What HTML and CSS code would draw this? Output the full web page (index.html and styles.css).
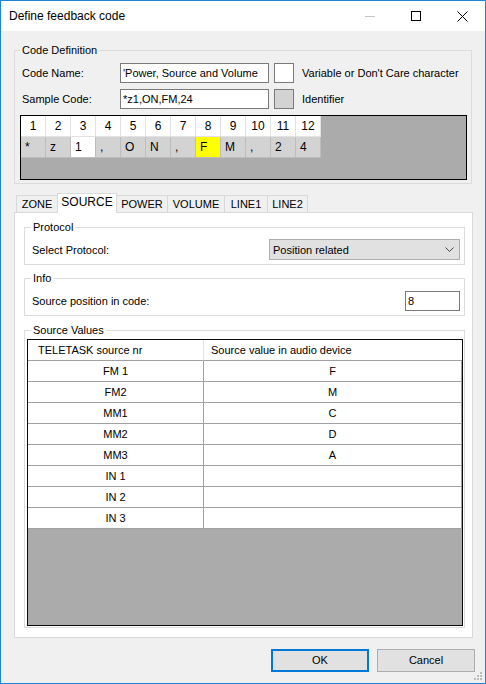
FILE: index.html
```html
<!DOCTYPE html>
<html>
<head>
<meta charset="utf-8">
<link rel="stylesheet" href="styles.css">
</head>
<body>
<div class="window">
  <div class="titlebar">
    <span class="title">Define feedback code</span>
    <div class="caption">
      <span class="cbtn"><svg width="10" height="10" viewBox="0 0 10 10"><line x1="0" y1="5.5" x2="10" y2="5.5" stroke="#c4c4c4" stroke-width="1"/></svg></span>
      <span class="cbtn"><svg width="10" height="10" viewBox="0 0 10 10"><rect x="0.5" y="0.5" width="9" height="9" fill="none" stroke="#000" stroke-width="1"/></svg></span>
      <span class="cbtn"><svg width="11" height="11" viewBox="0 0 11 11"><path d="M0.5 0.5 L10.5 10.5 M10.5 0.5 L0.5 10.5" stroke="#000" stroke-width="1" fill="none"/></svg></span>
    </div>
  </div>
  <div class="client">
    <fieldset class="group codedef">
      <legend class="legend-def">Code Definition</legend>
      <div class="row">
        <span class="lbl">Code Name:</span>
        <div class="textbox tb-wide">'Power, Source and Volume</div>
        <div class="swatch sw-white"></div>
        <span class="swatch-lbl">Variable or Don't Care character</span>
      </div>
      <div class="row row2">
        <span class="lbl">Sample Code:</span>
        <div class="textbox tb-wide">*z1,ON,FM,24</div>
        <div class="swatch sw-grey"></div>
        <span class="swatch-lbl">Identifier</span>
      </div>
      <div class="codegrid">
        <div class="grow ghead">
          <span class="gc">1</span><span class="gc">2</span><span class="gc">3</span><span class="gc">4</span><span class="gc">5</span><span class="gc">6</span><span class="gc">7</span><span class="gc">8</span><span class="gc">9</span><span class="gc">10</span><span class="gc">11</span><span class="gc">12</span>
        </div>
        <div class="grow gdata">
          <span class="gc">*</span><span class="gc">z</span><span class="gc g-white">1</span><span class="gc">,</span><span class="gc">O</span><span class="gc">N</span><span class="gc">,</span><span class="gc g-yellow">F</span><span class="gc">M</span><span class="gc">,</span><span class="gc">2</span><span class="gc">4</span>
        </div>
      </div>
    </fieldset>

    <div class="tabs">
      <span class="tab t-zone">ZONE</span>
      <span class="tab t-source active">SOURCE</span>
      <span class="tab t-power">POWER</span>
      <span class="tab t-volume">VOLUME</span>
      <span class="tab t-line1">LINE1</span>
      <span class="tab t-line2">LINE2</span>
    </div>
    <div class="tabpanel">
      <fieldset class="group g-protocol">
        <legend>Protocol</legend>
        <div class="prow">
          <span>Select Protocol:</span>
          <div class="combo"><span>Position related</span><svg width="9" height="5" viewBox="0 0 9 5"><polyline points="0.5,0.5 4.5,4.5 8.5,0.5" fill="none" stroke="#444" stroke-width="1"/></svg></div>
        </div>
      </fieldset>
      <fieldset class="group g-info">
        <legend>Info</legend>
        <div class="prow">
          <span>Source position in code:</span>
          <div class="textbox tb-small">8</div>
        </div>
      </fieldset>
      <fieldset class="group g-values">
        <legend>Source Values</legend>
        <div class="dgv">
          <div class="drow dhead"><span class="dc c1">TELETASK source nr</span><span class="dc c2">Source value in audio device</span></div>
          <div class="drow"><span class="dc c1">FM 1</span><span class="dc c2">F</span></div>
          <div class="drow"><span class="dc c1">FM2</span><span class="dc c2">M</span></div>
          <div class="drow"><span class="dc c1">MM1</span><span class="dc c2">C</span></div>
          <div class="drow"><span class="dc c1">MM2</span><span class="dc c2">D</span></div>
          <div class="drow"><span class="dc c1">MM3</span><span class="dc c2">A</span></div>
          <div class="drow"><span class="dc c1">IN 1</span><span class="dc c2"></span></div>
          <div class="drow"><span class="dc c1">IN 2</span><span class="dc c2"></span></div>
          <div class="drow"><span class="dc c1">IN 3</span><span class="dc c2"></span></div>
        </div>
      </fieldset>
    </div>

    <div class="buttons">
      <div class="btn btn-ok">OK</div>
      <div class="btn">Cancel</div>
    </div>
  </div>
  <svg class="grip" width="9" height="9" viewBox="0 0 9 9">
    <rect x="6" y="0" width="2" height="2" fill="#bdbdbd"/>
    <rect x="3" y="3" width="2" height="2" fill="#bdbdbd"/>
    <rect x="6" y="3" width="2" height="2" fill="#bdbdbd"/>
    <rect x="0" y="6" width="2" height="2" fill="#bdbdbd"/>
    <rect x="3" y="6" width="2" height="2" fill="#bdbdbd"/>
    <rect x="6" y="6" width="2" height="2" fill="#bdbdbd"/>
  </svg>
</div>
</body>
</html>
```

FILE: styles.css
```css
* { box-sizing: border-box; }
html, body { margin: 0; padding: 0; }
body {
  font-family: "Liberation Sans", Arial, sans-serif;
  font-size: 11px;
  color: #000;
  background: #f0f0f0;
}
.window {
  position: relative;
  width: 486px;
  height: 684px;
  border: 1px solid #2083d8;
  background: #f0f0f0;
  overflow: hidden;
}
.titlebar {
  height: 30px;
  background: #fff;
  display: flex;
  align-items: center;
  justify-content: space-between;
}
.title {
  font-size: 12px;
  padding-left: 8px;
}
.caption { display: flex; height: 30px; }
.cbtn {
  width: 46px;
  height: 30px;
  display: flex;
  align-items: center;
  justify-content: center;
}
.cbtn svg { display: block; }

.client { display: flex; flex-direction: column; }

fieldset.group {
  margin: 0;
  padding: 0;
  border: 1px solid #dcdcdc;
  min-inline-size: 0;
}
fieldset.group legend {
  padding: 0 2px;
  margin-left: -1px;
  line-height: 14px;
  font-size: 11px;
}
.codedef {
  margin: 12px 0 0 13px !important;
  width: 458px;
  padding: 6px 4px 3px 5px !important;
}
.codedef legend.legend-def { margin-left: 0; }
.g-values legend { margin-left: 4px !important; }
.row {
  display: flex;
  align-items: center;
  height: 20px;
  margin-left: 2px;
}
.row2 { margin-top: 6px; }
.lbl { width: 98px; }
.textbox {
  height: 20px;
  border: 1px solid #7a7a7a;
  background: #fff;
  padding-left: 2px;
  line-height: 18px;
  white-space: nowrap;
  overflow: hidden;
}
.tb-wide { width: 149px; }
.tb-small { width: 55px; }
.swatch {
  width: 20px;
  height: 20px;
  margin-left: 5px;
  border: 1px solid #7a7a7a;
}
.sw-white { background: #fff; }
.sw-grey { background: #d3d3d3; }
.swatch-lbl { margin-left: 8px; }

.codegrid {
  margin-top: 6px;
  width: 447px;
  height: 65px;
  border: 1px solid #000;
  background: #ababab;
}
.grow { display: flex; }
.gc {
  width: 25px;
  height: 21px;
  font-size: 12px;
  line-height: 20px;
  border-right: 1px solid;
  border-bottom: 1px solid;
}
.ghead .gc {
  background: #fff;
  border-color: #e2e2e2;
  text-align: center;
}
.gdata .gc {
  background: #d3d3d3;
  border-color: #bdbdbd;
  padding-left: 4px;
}
.gdata .gc.g-white { background: #fff; }
.gdata .gc.g-yellow { background: #ffff00; }

.tabs {
  display: flex;
  align-items: flex-start;
  height: 19px;
  margin: 9px 0 0 13px;
  padding-left: 2px;
}
.tab {
  height: 17px;
  margin-top: 2px;
  margin-right: -1px;
  border: 1px solid #d9d9d9;
  border-bottom: none;
  background: #f0f0f0;
  text-align: center;
  line-height: 16px;
  font-size: 11px;
}
.tab.active {
  position: relative;
  z-index: 1;
  height: 20px;
  margin-top: 0;
  background: #fff;
  line-height: 17px;
  font-size: 12px;
}
.t-zone { width: 42px; }
.t-source { width: 60px; }
.t-power { width: 52px; }
.t-volume { width: 58px; }
.t-line1 { width: 44px; }
.t-line2 { width: 41px; }

.tabpanel {
  margin-left: 13px;
  width: 459px;
  height: 426px;
  border: 1px solid #d9d9d9;
  background: #fff;
  padding: 7px 7px 9px 9px;
  display: flex;
  flex-direction: column;
}
.g-protocol { padding: 5px 4px 4px 7px !important; }
.g-info { margin-top: 6px !important; padding: 6px 4px 4px 7px !important; }
.g-values { margin-top: 7px !important; padding: 2px 1px 1px 2px !important; }
.prow {
  display: flex;
  align-items: center;
  justify-content: space-between;
}
.combo {
  width: 191px;
  height: 21px;
  border: 1px solid #adadad;
  background: #e1e1e1;
  display: flex;
  align-items: center;
  justify-content: space-between;
  padding: 0 5px 0 3px;
}
.combo svg { display: block; }

.dgv {
  width: 436px;
  height: 287px;
  border: 1px solid #0a0a0a;
  background: #ababab;
}
.drow {
  display: flex;
  height: 21px;
  background: #fff;
}
.dhead { height: 21px; }
.dc {
  height: 21px;
  line-height: 20px;
  border-right: 1px solid #a0a0a0;
  border-bottom: 1px solid #a0a0a0;
  text-align: center;
  white-space: nowrap;
}
.c1 { width: 176px; }
.c2 { width: 258px; }
.dhead .dc { text-align: left; }
.dhead .c1 { padding-left: 10px; border-right-color: #e3e3e3; }
.dhead .c2 { padding-left: 7px; border-right: none; }

.buttons {
  display: flex;
  justify-content: flex-end;
  gap: 8px;
  margin-top: 11px;
  padding-right: 10px;
}
.btn {
  width: 98px;
  height: 23px;
  border: 1px solid #adadad;
  background: #e1e1e1;
  text-align: center;
  line-height: 21px;
}
.btn-ok {
  border: 2px solid #0078d7;
  line-height: 19px;
}
.grip {
  position: absolute;
  right: 2px;
  bottom: 2px;
  display: block;
}
```
